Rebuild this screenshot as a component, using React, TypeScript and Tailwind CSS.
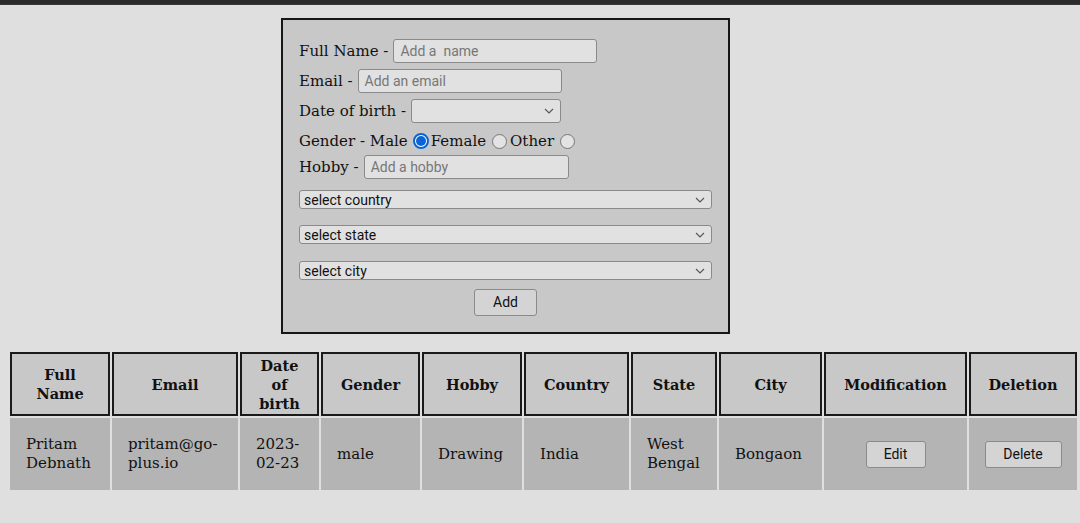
import React from "react";

const serif = { fontFamily: '"DejaVu Serif", "Liberation Serif", serif' };

function Chevron() {
  return (
    <svg width="10" height="6" viewBox="0 0 10 6" className="shrink-0">
      <path d="M1 1 L5 5 L9 1" fill="none" stroke="#555" strokeWidth="1.1" />
    </svg>
  );
}

function FakeSelect({ label, className }: { label?: string; className: string }) {
  return (
    <div
      className={
        "flex items-center justify-between rounded-[3px] border border-[#8a8a8a] bg-[#e1e1e1] pl-[4px] pr-[6px] text-[14px] text-[#111] font-['Roboto',sans-serif] " +
        className
      }
    >
      <span className="leading-none">{label}</span>
      <Chevron />
    </div>
  );
}

function Radio({ checked }: { checked?: boolean }) {
  return checked ? (
    <span className="ml-[5px] mr-[2px] inline-flex h-[16px] w-[16px] items-center justify-center rounded-full border-2 border-[#0b64d6] bg-white">
      <span className="h-[10px] w-[10px] rounded-full bg-[#0b64d6]" />
    </span>
  ) : (
    <span className="ml-[6px] mr-[3px] inline-block h-[15px] w-[15px] rounded-full border border-[#777] bg-[#e3e3e3]" />
  );
}

function TextInput({ placeholder, className }: { placeholder: string; className: string }) {
  return (
    <div
      className={
        "ml-[5px] flex items-center whitespace-pre rounded-[3px] border border-[#8a8a8a] bg-[#e1e1e1] px-[6px] text-[14px] text-[#777] font-['Roboto',sans-serif] " +
        className
      }
    >
      {placeholder}
    </div>
  );
}

const cols = [100, 126, 79, 99, 100, 105, 86, 103, 143, 108];
const heads = ["Full Name", "Email", "Date of birth", "Gender", "Hobby", "Country", "State", "City", "Modification", "Deletion"];

function Btn({ children, w }: { children: React.ReactNode; w: string }) {
  return (
    <div
      className={
        "mx-auto flex h-[27px] items-center justify-center rounded-[3px] border border-[#8a8a8a] bg-[#d4d4d4] text-[14px] text-[#111] font-['Roboto',sans-serif] " +
        w
      }
    >
      {children}
    </div>
  );
}

export default function App() {
  return (
    <div className="min-h-[523px] w-[1080px] bg-[#dfdfdf] text-[#111]" style={serif}>
      <div className="h-[5px] w-full border-b border-[#3a3a3a] bg-[#2b2b2b]" />
      <div className="flex pt-[13px] pl-[281px]">
        <div className="flex h-[316px] w-[449px] flex-col border-2 border-[#161616] bg-[#c8c8c8] pl-[16px] pt-[18px] text-[15px]">
          <div className="flex h-[26px] items-center">
            <span>Full Name -</span>
            <TextInput placeholder="Add a  name" className="h-[24px] w-[204px]" />
          </div>
          <div className="mt-[4px] flex h-[26px] items-center">
            <span>Email -</span>
            <TextInput placeholder="Add an email" className="h-[24px] w-[204px]" />
          </div>
          <div className="mt-[4px] flex h-[26px] items-center">
            <span>Date of birth -</span>
            <FakeSelect className="ml-[5px] h-[24px] w-[150px]" />
          </div>
          <div className="mt-[4px] flex h-[26px] items-center">
            <span>Gender - Male</span>
            <Radio checked />
            <span>Female</span>
            <Radio />
            <span>Other</span>
            <Radio />
          </div>
          <div className="flex h-[26px] items-center">
            <span>Hobby -</span>
            <TextInput placeholder="Add a hobby" className="h-[24px] w-[205px]" />
          </div>
          <FakeSelect label="select country" className="mt-[10px] h-[19px] w-[413px]" />
          <FakeSelect label="select state" className="mt-[16px] h-[19px] w-[413px]" />
          <FakeSelect label="select city" className="mt-[17px] h-[19px] w-[413px]" />
          <div className="mt-[9px] w-[413px]">
            <Btn w="w-[63px]">Add</Btn>
          </div>
        </div>
      </div>
      <div className="pl-[8px] pt-[16px]">
        <table className="w-[1071px] table-fixed border-separate border-spacing-[2px] text-[15px]">
          <colgroup>
            {cols.map((c, i) => (
              <col key={i} style={{ width: c }} />
            ))}
          </colgroup>
          <thead>
            <tr>
              {heads.map((h) => (
                <th
                  key={h}
                  className="h-[64px] border-2 border-[#1a1a1a] bg-[#c8c8c8] px-[14px] text-center text-[14.5px] font-bold leading-[19px]"
                >
                  {h}
                </th>
              ))}
            </tr>
          </thead>
          <tbody>
            <tr className="h-[72px] bg-[#b4b4b4] leading-[19px]">
              <td className="pl-[16px] pr-[4px]">Pritam Debnath</td>
              <td className="pl-[16px] pr-[4px]">pritam@go-plus.io</td>
              <td className="pl-[16px] pr-[4px]">2023-02-23</td>
              <td className="pl-[16px] pr-[4px]">male</td>
              <td className="pl-[16px] pr-[4px]">Drawing</td>
              <td className="pl-[16px] pr-[4px]">India</td>
              <td className="pl-[16px] pr-[4px]">West Bengal</td>
              <td className="pl-[16px] pr-[4px]">Bongaon</td>
              <td>
                <Btn w="w-[60px]">Edit</Btn>
              </td>
              <td>
                <Btn w="w-[77px]">Delete</Btn>
              </td>
            </tr>
          </tbody>
        </table>
      </div>
    </div>
  );
}
